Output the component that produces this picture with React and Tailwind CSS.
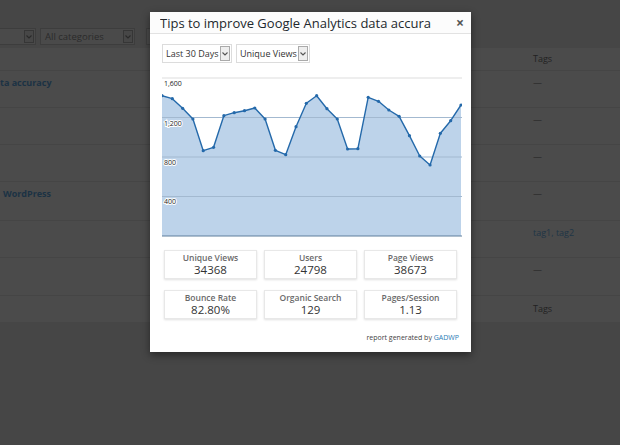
import React from "react";

const ys = [18.7, 21.7, 31.3, 42, 73.7, 70.3, 38.7, 35.7, 33.7, 31, 42, 73.3, 77.7, 49.7, 26.3, 18.7, 31.7, 42, 72, 71.7, 20.3, 24.3, 33, 39.3, 58.7, 79, 88, 56.3, 43.7, 28];
const pts = ys.map((y, i) => [i * 10.31, y]);

function Chart() {
  const line = pts.map((p) => p.join(",")).join(" ");
  const area = `0,159 ${line} ${pts[pts.length - 1][0]},159`;
  const labels = [
    ["1,600", 9],
    ["1,200", 48.5],
    ["800", 88],
    ["400", 127],
  ];
  return (
    <svg width="300" height="161" viewBox="0 0 300 161" className="block">
      <line x1="0" x2="300" y1="1" y2="1" stroke="#dddddd" strokeWidth="1" />
      <polygon points={area} fill="#bdd3ea" />
      {[40.5, 80, 119.5].map((y) => (
        <line key={y} x1="0" x2="300" y1={y} y2={y} stroke="#a3b9d0" strokeWidth="1" />
      ))}
      <line x1="0" x2="300" y1="159" y2="159" stroke="#5f7f9c" strokeWidth="1.2" />
      <polyline points={line} fill="none" stroke="#2469aa" strokeWidth="1.4" strokeLinejoin="round" />
      {pts.map(([x, y], i) => (
        <circle key={i} cx={x} cy={y} r="1.6" fill="#2469aa" />
      ))}
      {labels.map(([t, y]) => (
        <text
          key={t}
          x="2"
          y={y}
          fontSize="7"
          fill="#222"
          stroke="#ffffff"
          strokeWidth="2"
          paintOrder="stroke"
          fontFamily="'Open Sans', sans-serif"
        >
          {t}
        </text>
      ))}
    </svg>
  );
}

function Select({ label, w }) {
  return (
    <div className={`flex h-[19px] items-stretch border border-[#dcdcdc] bg-white ${w}`}>
      <div className="flex-1 pl-[3px] text-[9px] leading-[17px] text-[#333] whitespace-nowrap">{label}</div>
      <div className="my-[1px] mr-[1px] flex w-[10px] items-center justify-center border border-[#aaa] bg-[#eee]">
        <svg width="6" height="4" viewBox="0 0 6 4">
          <path d="M0.5 0.5 L3 3 L5.5 0.5" fill="none" stroke="#555" strokeWidth="1.1" />
        </svg>
      </div>
    </div>
  );
}

function Stat({ label, value }) {
  return (
    <div className="flex h-[29px] flex-col items-center justify-center border border-[#e8e8e8] bg-white shadow-[0_1px_2px_rgba(0,0,0,0.12)]">
      <div className="text-[8.5px] font-semibold leading-[11px] text-[#6a6a6a]">{label}</div>
      <div className="text-[11.5px] leading-[14px] text-[#333]">{value}</div>
    </div>
  );
}

function BgSelect({ label, className }) {
  return (
    <div className={`flex h-[17px] items-stretch border border-[#3d3d3d] bg-[#4a4a4a] ${className}`}>
      <div className="flex-1 pl-[4px] text-[9.5px] leading-[15px] text-[#2a2a2a] whitespace-nowrap overflow-hidden">{label}</div>
      <div className="my-[1px] mr-[1px] flex w-[10px] items-center justify-center border border-[#363636] bg-[#474747]">
        <svg width="6" height="4" viewBox="0 0 6 4">
          <path d="M0.5 0.5 L3 3 L5.5 0.5" fill="none" stroke="#2a2a2a" strokeWidth="1.1" />
        </svg>
      </div>
    </div>
  );
}

function Row({ h, title, tags, tagsLink, titlePad }) {
  return (
    <div className={`flex border-b border-[#454545] ${h}`}>
      <div className={`w-[533px] pt-[4px] text-[9px] font-bold leading-[16px] text-[#1b3244] ${titlePad || ""}`}>{title}</div>
      <div className={`pt-[4px] text-[9px] leading-[16px] ${tagsLink ? "text-[#1e3546]" : "text-[#222]"}`}>{tags}</div>
    </div>
  );
}

export default function App() {
  return (
    <div className="relative h-[445px] w-[620px] overflow-hidden bg-[#464646] font-['Open_Sans',sans-serif]">
      {/* background page */}
      <div className="flex h-[48px] items-start gap-[4px] pt-[28px]">
        <BgSelect label="" className="ml-[-10px] w-[46px]" />
        <BgSelect label="All categories" className="w-[95px]" />
        <BgSelect label="" className="ml-[7px] w-[40px]" />
      </div>
      <div className="bg-[#4b4b4b]">
        <div className="flex h-[23px] items-center border-b border-[#454545]">
          <div className="w-[533px]" />
          <div className="text-[9px] text-[#222]">Tags</div>
        </div>
        <Row h="h-[37px]" title="ta accuracy" tags="—" />
        <Row h="h-[37px]" title="" tags="—" />
        <Row h="h-[37px]" title="" tags="—" />
        <Row h="h-[39px]" title="WordPress" tags="—" titlePad="pl-[3px]" />
        <Row h="h-[37px]" title="" tags="tag1, tag2" tagsLink />
        <Row h="h-[38px]" title="" tags="—" />
        <div className="flex h-[26px] items-center">
          <div className="w-[533px]" />
          <div className="text-[9px] text-[#222]">Tags</div>
        </div>
      </div>

      {/* modal */}
      <div className="absolute left-[150px] top-[12px] flex h-[340px] w-[321px] flex-col bg-white shadow-[0_3px_8px_rgba(0,0,0,0.45)]">
        <div className="flex h-[22px] items-center border-b border-[#e2e2e2] bg-[#fcfcfc] pl-[10px] pr-[7px]">
          <div className="flex-1 overflow-hidden whitespace-nowrap text-[13px] leading-[20px] text-[#23282d]">
            Tips to improve Google Analytics data accura
          </div>
          <div className="ml-[6px] text-[14px] font-bold leading-[20px] text-[#555]">×</div>
        </div>
        <div className="flex flex-col px-[12px] pt-[10px]">
          <div className="flex gap-[4px]">
            <Select label="Last 30 Days" w="w-[70px]" />
            <Select label="Unique Views" w="w-[74px]" />
          </div>
          <div className="mt-[14px]">
            <Chart />
          </div>
          <div className="mt-[12px] grid grid-cols-[93px_93px_93px] gap-x-[7px] gap-y-[11px] pl-[2px]">
            <Stat label="Unique Views" value="34368" />
            <Stat label="Users" value="24798" />
            <Stat label="Page Views" value="38673" />
            <Stat label="Bounce Rate" value="82.80%" />
            <Stat label="Organic Search" value="129" />
            <Stat label="Pages/Session" value="1.13" />
          </div>
          <div className="mt-[14px] text-right text-[7px] leading-[10px] text-[#444]">
            report generated by <span className="text-[#2b7bb5]">GADWP</span>
          </div>
        </div>
      </div>
    </div>
  );
}
